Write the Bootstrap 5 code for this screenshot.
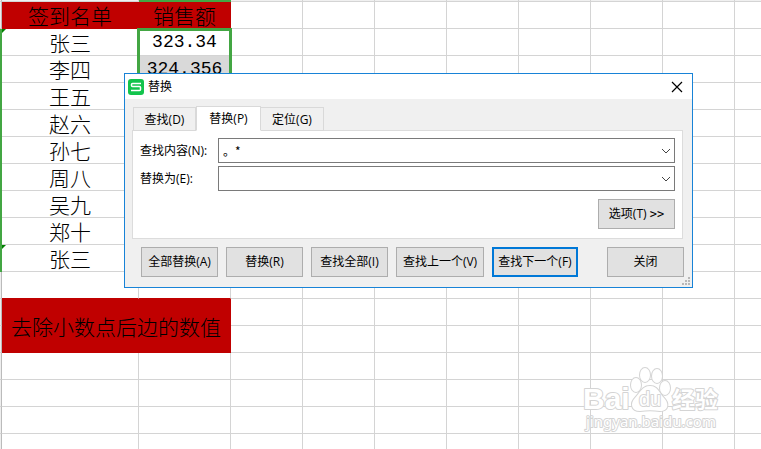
<!DOCTYPE html>
<html lang="zh-CN">
<head>
<meta charset="utf-8">
<meta name="viewport" content="width=device-width, initial-scale=1">
<title>替换</title>
<link href="https://cdn.jsdelivr.net/npm/bootstrap@5.3.0/dist/css/bootstrap.min.css" rel="stylesheet">
<style>
  body { font-family: "Open Sans", "Noto Sans CJK SC", sans-serif; font-size: 12px; line-height: 16px; color: #000; }

  /* spreadsheet */
  .sheet-grid { table-layout: fixed; border-collapse: separate; border-spacing: 0; font: 300 21px/26px "Noto Sans CJK SC", sans-serif; }
  .sheet-grid col.edge { width: 2px; }
  .sheet-grid col.names { width: 137px; }
  .sheet-grid col.sales { width: 92px; }
  .sheet-grid col.plain { width: 72px; }
  .sheet-grid td, .sheet-grid th { height: 27px; padding: 0; border: 0 solid #d4d4d4; border-width: 0 1px 1px 0; text-align: center; font-weight: 300; white-space: nowrap; position: relative; }
  .sheet-grid td:last-child { border-right-width: 0; }
  .sheet-grid tr.ruler td, .sheet-grid tr.ruler th { height: 2px; line-height: 1px; background: #f0f0f0; }
  .sheet-grid tr.ruler td.picked { background: #43a643; border-color: #43a643; }
  .sheet-grid .side { background: #eee; border-right-color: #bbb; }
  .sheet-grid .side.picked { background: #43a643; border-color: #43a643; }
  .sheet-grid .red-cell { background: #c00000; border-color: #c00000; }
  .sheet-grid .red-under { border-bottom-color: #c00000; }
  .sheet-grid .amount { font-family: "Liberation Mono", monospace; font-size: 18px; font-weight: 400; }
  .sheet-grid .shaded { background: #d9d9d9; }
  .flagged::before { content: ""; position: absolute; left: 0; top: 0; border: 2px solid transparent; border-top-color: #008000; border-left-color: #008000; }
  .range-frame { position: absolute; left: -2px; top: -1px; width: 95px; height: 244px; border: 3px solid #43a643; pointer-events: none; z-index: 1; }

  /* dialog window */
  .find-window { left: 124px; top: 73px; width: 569px; background: #f0f0f0; border: 1px solid #1883d7; z-index: 5; }
  .title-strip { height: 25px; padding: 0 7px 0 3px; }
  .close-x { width: 16px; height: 16px; }
  .window-body { padding: 7px 8px 10px 7px; }
  .find-tabs { margin-left: 1px; margin-bottom: -1px; border: 0; position: relative; }
  .find-tabs .nav-link { height: 24px; width: 63px; padding: 1px 0 0; border: 1px solid #d9d9d9; border-left: 0; border-radius: 0; margin: 0; color: #000; background: #f0f0f0; }
  .find-tabs .nav-item:first-child .nav-link { border-left: 1px solid #d9d9d9; }
  .find-tabs .nav-link.active { height: 25px; width: 65px; background: #fff; border: 1px solid #d9d9d9; border-bottom-color: #fff; }
  .tab-sheet { border: 1px solid #dcdcdc; margin-right: 1px; padding: 7px 7px 9px 7px; }
  .field-grid { display: grid; grid-template-columns: 78px 1fr; row-gap: 3px; align-items: center; }
  .combo { height: 25px; border: 1px solid #7a7a7a; }
  .combo input { min-width: 0; padding: 0 4px; outline: 0; font-family: "Noto Sans CJK SC", sans-serif; }
  .combo button { width: 17px; }
  .push { width: 77px; height: 30px; padding: 0; font-size: 12px; line-height: 16px; color: #000; background: #e1e1e1; border: 1px solid #adadad; border-radius: 0; white-space: nowrap; }
  .push-prev { width: 88px; }
  .push-next { width: 86px; border: 2px solid #0078d7; }
  .more-mark { font-family: "DejaVu Sans Mono", monospace; }
  .actions { gap: 8px; padding: 8px 0 0 9px; }
  .grip { right: 2px; bottom: 2px; }
  .watermark { right: 38px; bottom: 12px; z-index: 2; }
</style>
<script src="https://cdn.jsdelivr.net/npm/bootstrap@5.3.0/dist/js/bootstrap.bundle.min.js"></script>
</head>
<body>
<main class="position-relative vh-100 overflow-hidden">
  <table class="sheet-grid w-100">
    <colgroup>
      <col class="edge"><col class="names"><col class="sales">
      <col class="plain" span="7"><col>
    </colgroup>
    <tbody id="rows">
      <tr class="ruler"><th class="side"></th><td></td><td class="picked"></td></tr>
      <tr><th class="side"></th><th class="red-cell">签到名单</th><th class="red-cell">销售额</th></tr>
      <tr><th class="side picked"></th><td class="flagged">张三</td><td class="amount">323.34<span class="range-frame"></span></td></tr>
      <tr><th class="side picked"></th><td>李四</td><td class="amount shaded">324.356</td></tr>
      <tr><th class="side picked"></th><td>王五</td><td></td></tr>
      <tr><th class="side picked"></th><td>赵六</td><td></td></tr>
      <tr><th class="side picked"></th><td>孙七</td><td></td></tr>
      <tr><th class="side picked"></th><td>周八</td><td></td></tr>
      <tr><th class="side picked"></th><td>吴九</td><td></td></tr>
      <tr><th class="side picked"></th><td>郑十</td><td></td></tr>
      <tr><th class="side picked"></th><td class="flagged">张三</td><td></td></tr>
      <tr><th class="side"></th><td class="red-under"></td><td class="red-under"></td></tr>
      <tr><th class="side"></th><td class="red-cell" colspan="2" rowspan="2">去除小数点后边的数值</td></tr>
      <tr><th class="side"></th></tr>
      <tr><th class="side"></th><td></td><td></td></tr>
      <tr><th class="side"></th><td></td><td></td></tr>
      <tr><th class="side"></th><td></td><td></td></tr>
      <tr><th class="side"></th><td></td><td></td></tr>
    </tbody>
  </table>

  <svg class="watermark position-absolute" width="142" height="72" viewBox="0 0 142 72" fill="#fff" stroke="#d4d4d4" stroke-width="2" stroke-linejoin="round" paint-order="stroke" aria-label="Baidu 经验">
    <g stroke-width="2">
      <ellipse cx="55" cy="20" rx="5" ry="7"/><ellipse cx="64" cy="10" rx="5" ry="7"/>
      <ellipse cx="76" cy="11" rx="5" ry="7"/><ellipse cx="84" cy="23" rx="5" ry="7"/>
      <path d="M69 21c8 0 9 7 14 12s5 13-4 13c-7-1-13-1-20 0-9 0-10-8-5-13s7-12 15-12z"/>
    </g>
    <text x="2" y="44" font-family="Liberation Sans, sans-serif" font-weight="700" font-size="30">Bai</text>
    <text x="58" y="41" font-family="Liberation Sans, sans-serif" font-size="20">du</text>
    <text x="91" y="43" font-family="Noto Sans CJK SC, sans-serif" font-weight="700" font-size="23">经验</text>
    <text x="5" y="62" font-family="Noto Sans, sans-serif" font-size="15">jingyan.baidu.com</text>
  </svg>

  <section class="find-window position-absolute" role="dialog" aria-labelledby="window-title">
    <header class="title-strip d-flex align-items-center bg-white">
      <svg width="16" height="16" viewBox="0 0 16 16" aria-hidden="true"><rect width="16" height="16" rx="3" fill="#12c44c"/><path d="M13 4.5H4.5a1 1 0 0 0-1 1v1a1 1 0 0 0 1 1h7a1 1 0 0 1 1 1v2a1 1 0 0 1-1 1H3" fill="none" stroke="#fff" stroke-width="1.5"/></svg>
      <span class="ms-1" id="window-title">替换</span>
      <button type="button" class="close-x btn p-0 border-0 ms-auto d-flex align-items-center justify-content-center" aria-label="关闭窗口">
        <svg width="12" height="12" viewBox="0 0 12 12" stroke="#000" stroke-width="1.2"><path d="M1 1l10 10M11 1L1 11"/></svg>
      </button>
    </header>
    <div class="window-body">
      <ul class="find-tabs nav nav-tabs align-items-end" role="tablist">
        <li class="nav-item"><button type="button" class="nav-link" role="tab">查找(D)</button></li>
        <li class="nav-item"><button type="button" class="nav-link active" role="tab" aria-selected="true">替换(P)</button></li>
        <li class="nav-item"><button type="button" class="nav-link" role="tab">定位(G)</button></li>
      </ul>
      <div class="tab-sheet bg-white">
        <div class="field-grid">
          <label for="find-text">查找内容(N):</label>
          <div class="combo d-flex bg-white">
            <input id="find-text" class="flex-grow-1 border-0" type="text" value="。*">
            <button type="button" class="btn p-0 border-0 d-flex align-items-center justify-content-center" aria-label="查找记录"><svg width="10" height="6" viewBox="0 0 10 6" fill="none" stroke="#444"><path d="M1 1l4 4 4-4"/></svg></button>
          </div>
          <label for="replace-text">替换为(E):</label>
          <div class="combo d-flex bg-white">
            <input id="replace-text" class="flex-grow-1 border-0" type="text">
            <button type="button" class="btn p-0 border-0 d-flex align-items-center justify-content-center" aria-label="替换记录"><svg width="10" height="6" viewBox="0 0 10 6" fill="none" stroke="#444"><path d="M1 1l4 4 4-4"/></svg></button>
          </div>
        </div>
        <div class="d-flex justify-content-end pt-2"><button type="button" class="push btn">选项(T) <span class="more-mark">&gt;&gt;</span></button></div>
      </div>
      <div class="actions d-flex">
        <button type="button" class="push btn">全部替换(A)</button>
        <button type="button" class="push btn">替换(R)</button>
        <button type="button" class="push btn">查找全部(I)</button>
        <button type="button" class="push push-prev btn">查找上一个(V)</button>
        <button type="button" class="push push-next btn">查找下一个(F)</button>
        <button type="button" class="push btn ms-auto">关闭</button>
      </div>
    </div>
    <svg class="grip position-absolute" width="8" height="8" viewBox="0 0 8 8" fill="#b8b8b8" aria-hidden="true"><path d="M6 0h2v2H6zM3 3h2v2H3zM6 3h2v2H6zM0 6h2v2H0zM3 6h2v2H3zM6 6h2v2H6z"/></svg>
  </section>
</main>
<script>
  // Every row carries eight empty cells after the two data columns.
  for (const row of document.getElementById('rows').rows) {
    for (let i = 0; i < 8; i++) row.insertCell();
  }
</script>
</body>
</html>
